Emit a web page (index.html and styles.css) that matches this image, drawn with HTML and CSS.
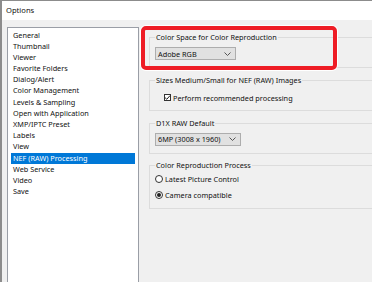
FILE: index.html
```html
<!DOCTYPE html>
<html lang="en">
<head>
  <meta charset="UTF-8">
  <title>Options</title>
  <link rel="stylesheet" href="styles.css">
</head>
<body>
  <div class="window">
    <div class="titlebar">Options</div>
    <div class="content">
      <ul class="list">
        <li>General</li>
        <li>Thumbnail</li>
        <li>Viewer</li>
        <li>Favorite Folders</li>
        <li>Dialog/Alert</li>
        <li>Color Management</li>
        <li>Levels &amp; Sampling</li>
        <li>Open with Application</li>
        <li>XMP/IPTC Preset</li>
        <li>Labels</li>
        <li>View</li>
        <li class="selected">NEF (RAW) Processing</li>
        <li>Web Service</li>
        <li>Video</li>
        <li>Save</li>
      </ul>
      <div class="panel">
        <fieldset class="group g1">
          <legend>Color Space for Color Reproduction</legend>
          <div class="select w1">
            <span>Adobe RGB</span>
            <svg class="chev" width="7" height="4" viewBox="0 0 7 4"><path d="M0.5 0.5 L3.5 3.5 L6.5 0.5" fill="none" stroke="#555" stroke-width="1"/></svg>
          </div>
        </fieldset>
        <fieldset class="group g2">
          <legend>Sizes Medium/Small for NEF (RAW) Images</legend>
          <div class="option check">
            <span class="checkbox">
              <svg width="7" height="7" viewBox="0 0 7 7"><path d="M1 3.6 L2.8 5.3 L6 1.6" fill="none" stroke="#222" stroke-width="1"/></svg>
            </span>
            <span>Perform recommended processing</span>
          </div>
        </fieldset>
        <fieldset class="group g3">
          <legend>D1X RAW Default</legend>
          <div class="select w2">
            <span>6MP (3008 x 1960)</span>
            <svg class="chev" width="7" height="4" viewBox="0 0 7 4"><path d="M0.5 0.5 L3.5 3.5 L6.5 0.5" fill="none" stroke="#555" stroke-width="1"/></svg>
          </div>
        </fieldset>
        <fieldset class="group g4">
          <legend>Color Reproduction Process</legend>
          <div class="option">
            <span class="radio"></span>
            <span>Latest Picture Control</span>
          </div>
          <div class="option">
            <span class="radio on"></span>
            <span>Camera compatible</span>
          </div>
        </fieldset>
      </div>
    </div>
    <div class="highlight"></div>
  </div>
</body>
</html>
```

FILE: styles.css
```css
html, body {
  margin: 0;
  height: 100%;
  overflow: hidden;
}
body {
  font-family: 'Noto Sans', 'Open Sans', sans-serif;
  font-size: 7.3px;
  color: #111;
  background: #f0f0f0;
}
.window {
  position: relative;
  height: 100%;
  border-top: 1px solid #8c8c8c;
  border-left: 2px solid #8c8c8c;
  box-sizing: border-box;
}
.titlebar {
  background: #fff;
  height: 19px;
  line-height: 19px;
  padding-left: 4px;
  font-size: 7.6px;
}
.content {
  display: flex;
  padding: 7px 0 0 5px;
  height: calc(100% - 19px);
  box-sizing: border-box;
}
.list {
  list-style: none;
  margin: 0;
  padding: 1.5px 2px 0 2px;
  width: 126px;
  flex-shrink: 0;
  background: #fff;
  border: 1px solid #9a9ea6;
  border-bottom: none;
}
.list li {
  line-height: 11.2px;
  height: 11.2px;
  padding-left: 2px;
  margin: 0 1px;
  white-space: nowrap;
}
.list li.selected {
  background: #0078d7;
  color: #fff;
}
.panel {
  margin-left: 10px;
  padding-top: 4.5px;
  display: flex;
  flex-direction: column;
  width: 260px;
  flex-shrink: 0;
}
.group {
  margin: 0;
  padding: 0 0 7px 5px;
  border: 1px solid #dcdcdc;
  min-width: 0;
}
.group legend {
  padding: 0 1px;
  line-height: 11px;
  height: 11px;
  white-space: nowrap;
}
.g1 { padding-top: 4.5px; padding-bottom: 6.5px; }
.g2 { margin-top: 7px; padding-top: 6.5px; }
.g3 { margin-top: 6.5px; padding-top: 4px; }
.g4 { margin-top: 6px; padding-top: 3px; }
.select {
  display: flex;
  align-items: center;
  justify-content: space-between;
  height: 13px;
  box-sizing: border-box;
  background: #e1e1e1;
  border: 1px solid #adadad;
  padding: 0 4px 0 2px;
}
.select.w1 { width: 81px; }
.select.w2 { width: 86px; }
.option {
  display: flex;
  align-items: center;
  gap: 2px;
  height: 11px;
}
.option + .option {
  margin-top: 5px;
}
.option.check {
  padding-left: 9px;
}
.checkbox {
  width: 7px;
  height: 7px;
  border: 1px solid #333;
  background: #fff;
  box-sizing: border-box;
  display: flex;
}
.checkbox svg {
  margin: -1px;
}
.radio {
  width: 8px;
  height: 8px;
  border: 1px solid #333;
  border-radius: 50%;
  background: #fff;
  box-sizing: border-box;
  display: flex;
  align-items: center;
  justify-content: center;
}
.radio.on:after {
  content: "";
  width: 4px;
  height: 4px;
  border-radius: 50%;
  background: #222;
}
/* annotation frame over the first group */
.highlight {
  position: absolute;
  left: 139px;
  top: 25px;
  width: 196px;
  height: 44px;
  border: 4px solid #ee1c25;
  border-radius: 5px;
  box-sizing: border-box;
  box-shadow: 0 0 0 1px #fff;
}
```
